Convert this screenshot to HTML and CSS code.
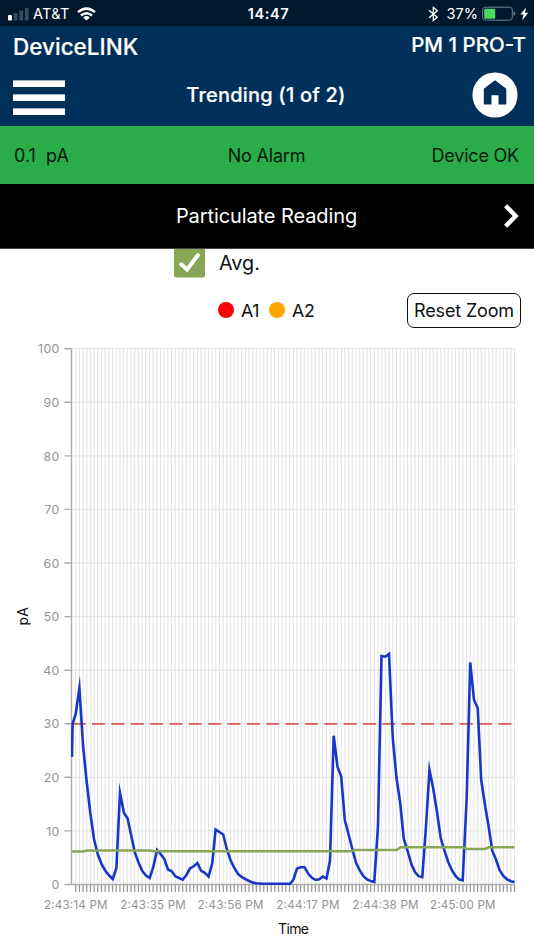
FILE: index.html
```
<!DOCTYPE html>
<html lang="en">
<head>
<meta charset="utf-8">
<title>DeviceLINK</title>
<link rel="stylesheet" href="styles.css">
</head>
<body>
<div class="statusbar">
  <div class="carrier">
    <svg class="signal" width="21" height="14" viewBox="0 0 21 14"><rect x="0" y="8" width="4" height="5.5" rx="1" fill="#fff"/><g fill="#354b60"><rect x="5.7" y="6" width="3.8" height="7.5" rx="1"/><rect x="11.3" y="3.5" width="3.8" height="10" rx="1"/><rect x="16.8" y="1" width="3.8" height="12.5" rx="1"/></g></svg>
    <span class="network">AT&amp;T</span>
    <svg class="wifi" width="19" height="14" viewBox="0 0 19 14" fill="none" stroke="#fff" stroke-width="2.5"><path d="M1 5.1Q9.5-1.9 18 5.1"/><path d="M4 8.5Q9.5 4 15 8.5"/><path d="M9.5 13.6L6.2 10.4Q9.5 7.8 12.8 10.4Z" fill="#fff" stroke="none"/></svg>
  </div>
  <span class="clock">14:47</span>
  <div class="power">
    <svg width="11" height="16" viewBox="0 0 11 16" fill="none" stroke="#fff" stroke-width="1.3"><path d="M1 4.3L9.3 11.3L5.3 14.6V1.4L9.3 4.7L1 11.7"/></svg>
    <span class="percent">37%</span>
    <svg class="battery" width="34" height="16" viewBox="0 0 34 16"><rect x=".7" y="1.2" width="29.6" height="13" rx="2.6" fill="none" stroke="#718090" stroke-width="1"/><rect x="2.2" y="2.8" width="11" height="10" rx="1" fill="#4bd964"/><path d="M31.6 5.3Q33.3 5.8 33.3 7.7T31.6 10.1Z" fill="#718090"/></svg>
    <svg class="bolt" width="9" height="14" viewBox="0 0 9 14"><path d="M6 .5L.4 7.6H3.6L2.2 13.3L8.3 5.7H5Z" fill="#fff"/></svg>
  </div>
</div>
<header class="header">
  <div class="brand"><span class="app">DeviceLINK</span><span class="device">PM 1 PRO-T</span></div>
  <div class="nav">
    <div class="menu"><i></i><i></i><i></i></div>
    <h1 class="title">Trending (1 of 2)</h1>
    <svg class="home" width="46" height="46" viewBox="0 0 46 46"><circle cx="23" cy="23" r="22.6" fill="#fff"/><path d="M23 8.2L34.3 16.8V32.6H26.5V23.3H19.5V32.6H11.8V16.8Z" fill="#003059"/></svg>
  </div>
</header>
<div class="status"><span class="reading">0.1&nbsp; pA</span><span class="alarm">No Alarm</span><span class="ok">Device OK</span></div>
<div class="picker"><span class="metric">Particulate Reading</span>
  <svg class="next" width="17" height="26" viewBox="0 0 17 26"><path d="M2.6 2.7L12.7 13L2.6 23.3" fill="none" stroke="#fff" stroke-width="4.4"/></svg>
</div>
<main>
  <div class="average">
    <svg width="31" height="29" viewBox="0 0 31 29"><path d="M0 0H31V26.5Q31 28.5 29 28.5H2Q0 28.5 0 26.5Z" fill="#87a757"/><path d="M7.2 15.3L13 20.6L23.8 6.2" fill="none" stroke="#fff" stroke-width="4" stroke-linecap="round"/></svg>
    <span class="avg">Avg.</span>
  </div>
  <div class="legend">
    <span class="dot red"></span><span class="key first">A1</span><span class="dot orange"></span><span class="key">A2</span>
    <button class="reset"><span>Reset Zoom</span></button>
  </div>
  <svg class="chart" width="534" height="615" viewBox="0 335 534 615">
    <defs>
      <clipPath id="plot"><rect x="71" y="348" width="444" height="538"/></clipPath>
    </defs>
    <g class="gridlines">
      <path class="columns" d=""/>
      <path d="M72 348.7H514.5M72 402.3H514.5M72 455.9H514.5M72 509.4H514.5M72 563H514.5M72 616.6H514.5M72 670.2H514.5M72 723.8H514.5M72 777.3H514.5M72 830.9H514.5"/>
    </g>
    <path class="ticks" d=""/>
    <path class="axis" d="M64.5 348.7H71.5M64.5 402.3H71.5M64.5 455.9H71.5M64.5 509.4H71.5M64.5 563H71.5M64.5 616.6H71.5M64.5 670.2H71.5M64.5 723.8H71.5M64.5 777.3H71.5M64.5 830.9H71.5M64.5 884.5H515M71.5 348.7V884.5"/>
    <path class="limit" d="M72.7 723.8H514"/>
    <g clip-path="url(#plot)">
      <path class="series" d="M72 757L72.6 724L75.7 714L79.4 688L83 745L86.6 781L90.3 813L94 839L98 855L102 865L105.5 871L109.2 875.5L112.8 879L116.4 868L120 793L124 813L127.6 818.5L131.3 836L135 853L138.7 863L142.3 871L146 875.5L149.7 878L153.3 867L157 850L160.7 854L164.3 859L168 869.5L171.7 871.3L175.3 876.3L179 878L182.7 879.7L186.4 875L190 868.5L194 866L197.4 863L201 870.5L204.8 872.8L208.6 876.6L212.3 863L215.6 829.5L219.3 832L223.2 834.5L226.8 849L230.3 859.5L234 867.5L238 874L241.6 877L245.3 879L249 881L252.8 882.5L256 883.2L263 883.8H290.2L293.5 879.5L297 868.5L300.5 867.2H304.5L308.3 873.8L312 877.8L315.5 880L319.3 879.3L322.7 876.6L326.5 878.5L330 860.5L333.7 735.7L337.5 767L341.2 776.5L344.8 820L348.5 834L352.2 848.5L355.8 862L359.5 870L363.3 876L367 879.5L370.6 881L374.3 881.8L378 826L381.5 656L385.5 656.7L389 653.8L392.7 737L396.5 778L400.2 803L403.8 839L407.6 851L411.5 864.5L415 872L418.5 876.2L422.3 877.2L426 826L429.5 770L433.3 789L437 812L440.7 838L444.3 850L448 861.5L451.8 870L455.5 876L459 879.4L462.7 880.3L466.7 798L470.2 662.5L474 700L477.7 708L481.2 780L485 805L488.7 827L492.3 851L496 859.5L499.5 870L503.3 876L507 879.3L510.7 881.2L514.5 882"/>
      <path class="mean" d="M72 851.5H83L87 850.5H150L154 851.3H351L355 850H396.5L400.5 847.3H463L467 849H485L489 847.2H514.5"/>
    </g>
    <g class="ylabels">
      <text x="59.5" y="353.3">100</text><text x="59.5" y="406.9">90</text><text x="59.5" y="460.5">80</text><text x="59.5" y="514">70</text><text x="59.5" y="567.6">60</text><text x="59.5" y="621.2">50</text><text x="59.5" y="674.8">40</text><text x="59.5" y="728.4">30</text><text x="59.5" y="781.9">20</text><text x="59.5" y="835.5">10</text><text x="59.5" y="889.1">0</text>
    </g>
    <g class="xlabels">
      <text x="44" y="909" textLength="63.5">2:43:14 PM</text><text x="120.3" y="909" textLength="65.5">2:43:35 PM</text><text x="197.5" y="909" textLength="66">2:43:56 PM</text><text x="276.3" y="909" textLength="63.3">2:44:17 PM</text><text x="352.5" y="909" textLength="66">2:44:38 PM</text><text x="430" y="909" textLength="65.5">2:45:00 PM</text>
    </g>
    <text class="axistitle" x="278" y="934" textLength="31">Time</text>
    <text class="axistitle" transform="translate(27.6 625.5) rotate(-90)" textLength="18.5">pA</text>
  </svg>
</main>
<script src="chart.js"></script>
</body>
</html>
```
FILE: chart.js
```
const left = 72;
const step = 442.5 / 120;
let columns = "";
let ticks = "";
for (let i = 1; i <= 120; i++) {
  const x = (left + i * step).toFixed(2);
  columns += `M${x} 348.7V884`;
  ticks += `M${x} 885V892`;
}
document.querySelector(".columns").setAttribute("d", columns);
document.querySelector(".ticks").setAttribute("d", ticks);
```
FILE: styles.css
```
* { box-sizing: border-box; }
body { margin: 0; width: 534px; height: 950px; overflow: hidden; background: #fff; color: #111; font-family: Inter, "Liberation Sans", sans-serif; }
svg { display: block; flex: none; }
span, h1 { white-space: nowrap; }
.statusbar { height: 26px; background: #00182d; color: #fff; display: grid; grid-template-columns: 1fr auto 1fr; align-items: center; padding: 1px 5px 0 8px; font-size: 14px; }
.carrier, .power { display: flex; align-items: center; }
.power { justify-content: flex-end; }
.network { margin-left: 4px; width: 37px; font-size: 14.5px; letter-spacing: .3px; }
.wifi { margin-left: 7px; }
.clock { font-weight: 600; font-size: 14.5px; letter-spacing: .6px; }
.percent { margin: 0 4px 0 8px; font-size: 14.5px; }
.bolt { margin-left: 4px; }
.header { height: 100px; background: #003059; color: #fff; }
.brand { height: 39px; display: flex; justify-content: space-between; padding: 6px 8px 0 13px; line-height: 30px; }
.app { font-size: 22.5px; font-weight: 500; -webkit-text-stroke: .2px #fff; }
.device { font-size: 20.5px; font-weight: 500; line-height: 25px; -webkit-text-stroke: .2px #fff; }
.nav { height: 60px; display: grid; grid-template-columns: 52px 1fr 46px; align-items: center; padding: 0 16px 0 13px; }
.menu { display: grid; gap: 7px; padding-top: 4px; }
.menu i { height: 7px; background: #fff; border: solid #9eafc0; border-width: 1px 0 0; }
.title { margin: 0; padding-right: 5px; text-align: center; font-size: 20px; font-weight: 500; line-height: 30px; letter-spacing: .2px; -webkit-text-stroke: .2px #fff; }
.status { height: 58px; background: #2aac49; display: grid; grid-template-columns: 1fr auto 1fr; align-items: center; padding: 0 15px 0 14px; font-size: 18px; color: #071b0b; }
.alarm { letter-spacing: -.2px; }
.ok { text-align: right; letter-spacing: -.2px; }
.picker { height: 65px; background: #000; border-bottom: 1px solid #444; color: #fff; display: grid; grid-template-columns: 30px 1fr 17px; align-items: center; padding: 0 14px; font-size: 20px; letter-spacing: -.1px; }
.metric { grid-column: 2; text-align: center; padding-right: 14px; }
.average { height: 29px; padding-left: 174px; display: flex; gap: 14px; }
.avg { font-size: 19.8px; line-height: 28px; }
.legend { height: 57px; display: flex; align-items: center; padding: 7px 13px 0 218px; font-size: 17.8px; }
.dot { width: 16px; height: 16px; border-radius: 50%; background: #f00; flex: none; }
.orange { background: #ffa500; }
.key { margin-left: 7px; letter-spacing: -.3px; }
.key.first { width: 19px; margin-right: 9px; }
.reset { margin-left: auto; width: 114px; height: 35px; padding: 0; border: 1.5px solid #111; border-radius: 7px; background: #fff; color: #111; font: 18px Inter, sans-serif; letter-spacing: -.15px; display: flex; align-items: center; justify-content: center; }
.chart { font-family: Inter, sans-serif; }
.gridlines { stroke: #e0e0e0; stroke-width: .9; }
.ticks { stroke: #999; stroke-width: 1.3; }
.axis { fill: none; stroke: #aaa; stroke-width: 1.4; }
.limit { stroke: #dc5a5a; stroke-width: 1.8; stroke-dasharray: 13 6.35; }
.series { fill: none; stroke: #1637c8; stroke-width: 2.6; stroke-miterlimit: 12; }
.mean { fill: none; stroke: #87a757; stroke-width: 2.6; }
.ylabels { fill: #929292; font-size: 12.3px; text-anchor: end; letter-spacing: .3px; }
.xlabels { fill: #929292; font-size: 11.6px; }
.axistitle { fill: #111; font-size: 14px; }
```
